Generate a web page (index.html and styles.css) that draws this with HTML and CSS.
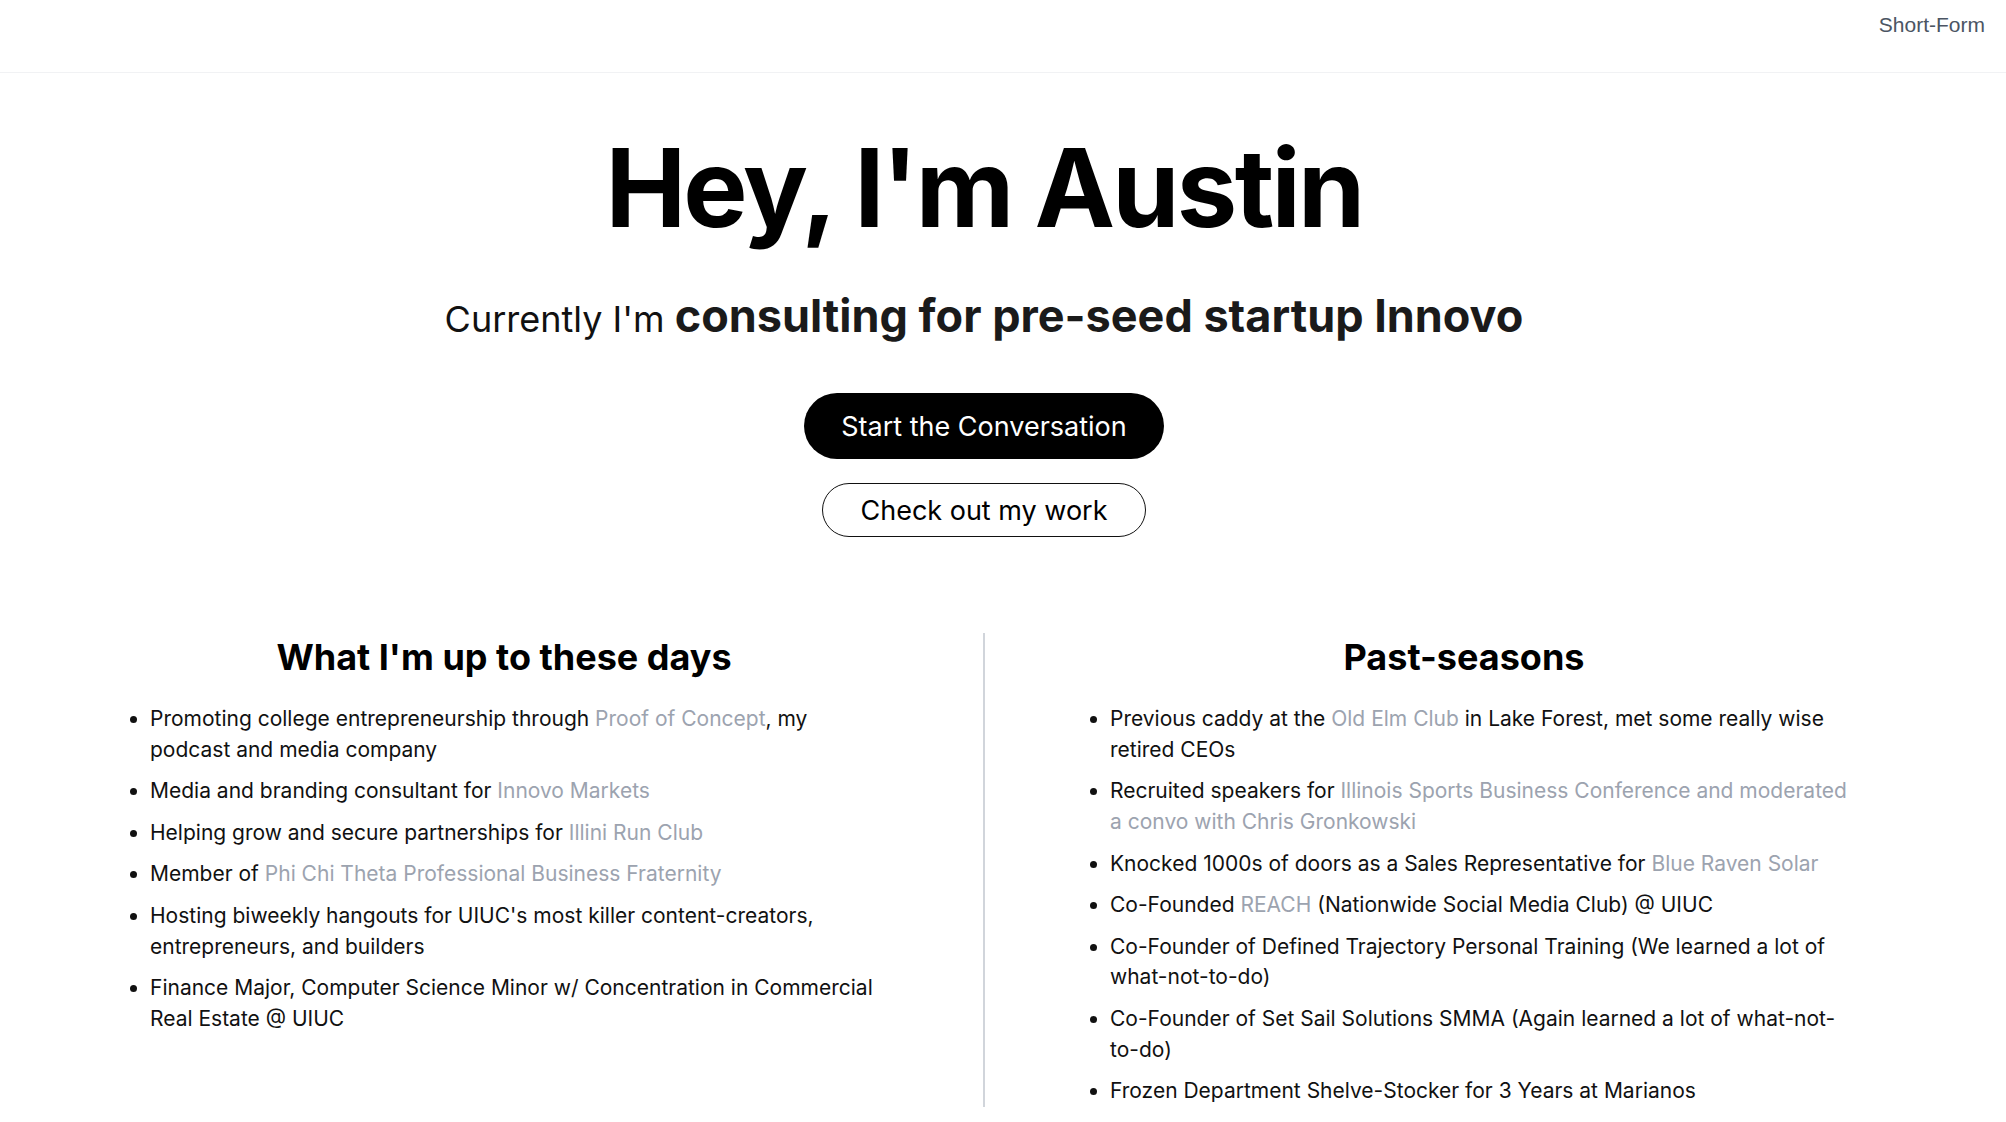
FILE: index.html
```html
<!DOCTYPE html>
<html lang="en">
<head>
<meta charset="utf-8">
<title>Austin</title>
<link rel="stylesheet" href="styles.css">
</head>
<body>
<header class="topbar">
  <a class="nav-link" href="#">Short-Form</a>
</header>
<main class="page">
  <section class="hero">
    <h1 class="hero-title">Hey, I'm Austin</h1>
    <p class="hero-sub">Currently I'm <strong class="hero-strong">consulting for pre-seed startup Innovo</strong></p>
    <div class="hero-actions">
      <a class="btn btn-dark" href="#">Start the Conversation</a>
      <a class="btn btn-outline" href="#">Check out my work</a>
    </div>
  </section>
  <section class="columns">
    <div class="col">
      <h2 class="col-title">What I'm up to these days</h2>
      <ul class="col-list">
        <li>Promoting college entrepreneurship through <a class="muted" href="#">Proof of Concept</a>, my podcast and media company</li>
        <li>Media and branding consultant for <a class="muted" href="#">Innovo Markets</a></li>
        <li>Helping grow and secure partnerships for <a class="muted" href="#">Illini Run Club</a></li>
        <li>Member of <a class="muted" href="#">Phi Chi Theta Professional Business Fraternity</a></li>
        <li>Hosting biweekly hangouts for UIUC's most killer content-creators, entrepreneurs, and builders</li>
        <li>Finance Major, Computer Science Minor w/ Concentration in Commercial Real Estate @ UIUC</li>
      </ul>
    </div>
    <div class="divider"></div>
    <div class="col">
      <h2 class="col-title">Past-seasons</h2>
      <ul class="col-list">
        <li>Previous caddy at the <a class="muted" href="#">Old Elm Club</a> in Lake Forest, met some really wise retired CEOs</li>
        <li>Recruited speakers for <a class="muted" href="#">Illinois Sports Business Conference and moderated a convo with Chris Gronkowski</a></li>
        <li>Knocked 1000s of doors as a Sales Representative for <a class="muted" href="#">Blue Raven Solar</a></li>
        <li>Co-Founded <a class="muted" href="#">REACH</a> (Nationwide Social Media Club) @ UIUC</li>
        <li>Co-Founder of Defined Trajectory Personal Training (We learned a lot of what-not-to-do)</li>
        <li>Co-Founder of Set Sail Solutions SMMA (Again learned a lot of what-not-to-do)</li>
        <li>Frozen Department Shelve-Stocker for 3 Years at Marianos</li>
      </ul>
    </div>
  </section>
</main>
</body>
</html>
```
FILE: styles.css
```css
* { box-sizing: border-box; }
html, body { margin: 0; padding: 0; background: #ffffff; }
body {
  font-family: Inter, "Noto Sans", "Liberation Sans", sans-serif;
  color: #000000;
  overflow: hidden;
}
a { text-decoration: none; }

.topbar {
  height: 73px;
  border-bottom: 1px solid #f1f2f4;
  display: flex;
  justify-content: flex-end;
  align-items: flex-start;
  padding: 13px 21px 0 0;
}
.nav-link {
  font-family: "Liberation Sans", Arial, sans-serif;
  font-size: 21px;
  color: #4b5563;
}

.page {
  margin-right: 38px;
}

.hero {
  display: flex;
  flex-direction: column;
  align-items: center;
  text-align: center;
  padding-top: 61px;
}
.hero-title {
  margin: 0;
  font-size: 108px;
  line-height: 1;
  font-weight: 700;
  letter-spacing: -0.025em;
  color: #000;
}
.hero-sub {
  margin: 47px 0 0;
  font-size: 36px;
  line-height: 1.2;
  color: #111;
}
.hero-strong {
  font-size: 45px;
  font-weight: 700;
  color: #1a1a1a;
}
.hero-actions {
  margin-top: 50px;
  display: flex;
  flex-direction: column;
  align-items: center;
  gap: 24px;
}
.btn {
  display: inline-flex;
  align-items: center;
  justify-content: center;
  border-radius: 999px;
  font-size: 27px;
  line-height: 1;
}
.btn-dark {
  height: 66px;
  padding: 0 37px;
  background: #000;
  color: #fff;
}
.btn-outline {
  height: 54px;
  padding: 0 37px;
  border: 1.5px solid #111;
  color: #000;
}

.columns {
  width: 1748px;
  margin: 0 auto;
  margin-top: 96px;
  display: flex;
  align-items: stretch;
}
.col {
  flex: 0 0 788px;
}
.divider {
  flex: 0 0 2px;
  margin: 0 85px;
  background: #d1d5db;
}
.col-title {
  margin: 2px 0 25px;
  text-align: center;
  font-size: 36px;
  line-height: normal;
  font-weight: 700;
  color: #000;
}
.col-list {
  margin: 0;
  padding: 0 7px 0 40px;
  list-style: disc;
  font-size: 21px;
  line-height: 30.7px;
  color: #111;
}
.col-list li {
  margin-bottom: 10.9px;
}
.col-list li:last-child {
  margin-bottom: 0;
}
.muted {
  color: #9ca3af;
}
```
